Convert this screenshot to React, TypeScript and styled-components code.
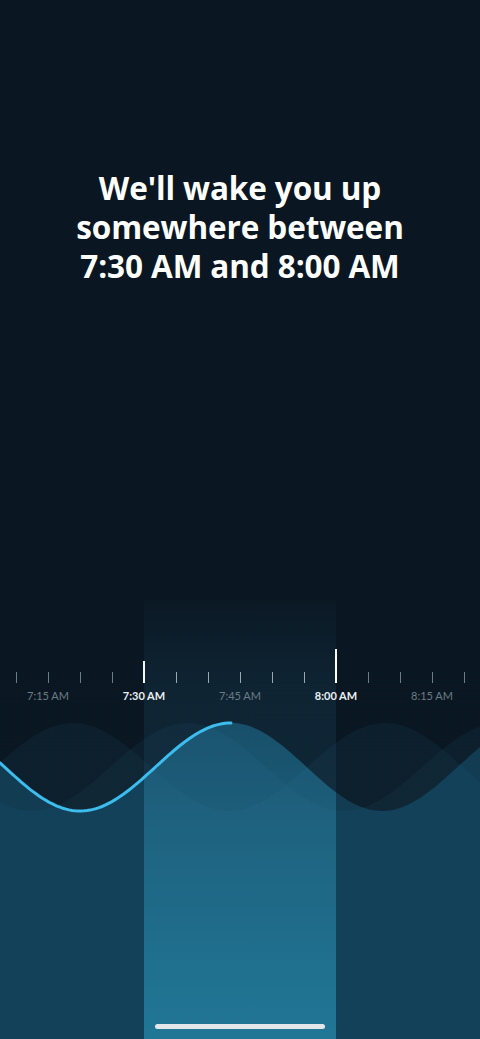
import React from 'react';
import styled, { createGlobalStyle } from 'styled-components';

const GlobalStyle = createGlobalStyle`
  html, body {
    margin: 0;
    padding: 0;
    background: #0a1621;
  }
  * {
    box-sizing: border-box;
  }
`;

const Screen = styled.div`
  display: flex;
  flex-direction: column;
  height: 1039px;
  overflow: hidden;
  position: relative;
  background: linear-gradient(180deg, #0a1621 0%, #0a1823 100%);
  font-family: 'Lato', 'Liberation Sans', sans-serif;
`;

const Headline = styled.h1`
  margin: 0;
  padding-top: 168px;
  color: #ffffff;
  font-family: 'Open Sans', 'Liberation Sans', sans-serif;
  font-size: 31.5px;
  line-height: 39px;
  font-weight: 700;
  text-align: center;
  letter-spacing: -0.1px;
`;

const Spacer = styled.div`
  flex: 1 1 auto;
`;

const Chart = styled.section`
  position: relative;
  flex: 0 0 439px;
  display: flex;
  flex-direction: column;
`;

const Band = styled.div`
  position: absolute;
  top: 0;
  bottom: 0;
  left: 144px;
  width: 192px;
  background: linear-gradient(
    180deg,
    rgba(40, 110, 150, 0.02) 0px,
    rgba(40, 110, 150, 0.15) 90px,
    rgba(40, 110, 150, 0.19) 100%
  );
`;

const Ticks = styled.div`
  position: relative;
  display: grid;
  grid-template-columns: repeat(15, 32px);
  justify-items: center;
  align-items: end;
  height: 34px;
  margin-top: 49px;
`;

type TickKind = 'minor' | 'inner' | 'start' | 'end';

const tickHeight: Record<TickKind, number> = { minor: 11, inner: 11, start: 22, end: 34 };
const tickColor: Record<TickKind, string> = {
  minor: 'rgba(190, 205, 215, 0.55)',
  inner: 'rgba(205, 220, 230, 0.72)',
  start: '#f4f7f9',
  end: '#ffffff',
};

const Tick = styled.span<{ $kind: TickKind }>`
  display: block;
  width: ${(p) => (p.$kind === 'start' || p.$kind === 'end' ? 1.5 : 1)}px;
  height: ${(p) => tickHeight[p.$kind]}px;
  background: ${(p) => tickColor[p.$kind]};
`;

const Labels = styled.div`
  position: relative;
  display: grid;
  grid-template-columns: repeat(5, 96px);
  margin-top: 6px;
  height: 14px;
`;

const Label = styled.span<{ $active?: boolean }>`
  text-align: center;
  font-size: 11px;
  line-height: 14px;
  font-weight: ${(p) => (p.$active ? 700 : 400)};
  color: ${(p) => (p.$active ? '#e9eff3' : '#6d7b87')};
`;

const Waves = styled.svg`
  position: relative;
  display: block;
  width: 480px;
  height: 336px;
`;

const HomeIndicator = styled.div`
  position: absolute;
  left: 155px;
  bottom: 10px;
  width: 170px;
  height: 5px;
  border-radius: 3px;
  background: #e4e7ea;
`;

const MID = 767;
const AMP = 44;
const BOTTOM = 1039;

const waveY = (x: number, peak: number, period: number) =>
  MID - AMP * Math.cos((2 * Math.PI * (x - peak)) / period);

const curve = (from: number, to: number, peak: number, period: number) => {
  const pts: string[] = [];
  for (let x = from; x <= to; x += 3) {
    pts.push(`${x.toFixed(1)},${waveY(x, peak, period).toFixed(1)}`);
  }
  pts.push(`${to},${waveY(to, peak, period).toFixed(1)}`);
  return 'M' + pts.join(' L');
};

const area = (peak: number, period: number) =>
  `${curve(0, 480, peak, period)} L480,${BOTTOM} L0,${BOTTOM} Z`;

const MAIN = { peak: 231, period: 302 };
const GHOST_A = { peak: 73, period: 312 };
const GHOST_B = { peak: 188, period: 312 };

const tickKinds: TickKind[] = Array.from({ length: 15 }, (_, i) => {
  if (i === 4) return 'start';
  if (i === 10) return 'end';
  if (i > 4 && i < 10) return 'inner';
  return 'minor';
});

const times = [
  { text: '7:15 AM', active: false },
  { text: '7:30 AM', active: true },
  { text: '7:45 AM', active: false },
  { text: '8:00 AM', active: true },
  { text: '8:15 AM', active: false },
];

export default function App() {
  return (
    <>
      <GlobalStyle />
      <Screen>
        <Headline>
          We'll wake you up
          <br />
          somewhere between
          <br />
          7:30 AM and 8:00 AM
        </Headline>

        <Spacer />

        <Chart>
          <Band />

          <Ticks>
            {tickKinds.map((kind, i) => (
              <Tick key={i} $kind={kind} />
            ))}
          </Ticks>

          <Labels>
            {times.map((t) => (
              <Label key={t.text} $active={t.active}>
                {t.text}
              </Label>
            ))}
          </Labels>

          <Waves viewBox="0 703 480 336" preserveAspectRatio="none">
            <defs>
              <clipPath id="band-clip">
                <rect x="144" y="703" width="192" height="336" />
              </clipPath>
              <linearGradient id="band-fill" x1="0" y1="720" x2="0" y2="1039" gradientUnits="userSpaceOnUse">
                <stop offset="0" stopColor="#184f6a" />
                <stop offset="0.45" stopColor="#1c617c" />
                <stop offset="1" stopColor="#1f7492" />
              </linearGradient>
            </defs>

            <path d={area(MAIN.peak, MAIN.period)} fill="#0f364b" />
            <path d={area(MAIN.peak, MAIN.period)} fill="url(#band-fill)" clipPath="url(#band-clip)" />

            <path d={area(GHOST_A.peak, GHOST_A.period)} fill="rgba(60, 140, 185, 0.07)" />
            <path d={area(GHOST_B.peak, GHOST_B.period)} fill="rgba(60, 140, 185, 0.07)" />

            <path
              d={curve(0, MAIN.peak, MAIN.peak, MAIN.period)}
              fill="none"
              stroke="#3cbdee"
              strokeWidth="3"
              strokeLinecap="round"
            />
          </Waves>
        </Chart>

        <HomeIndicator />
      </Screen>
    </>
  );
}
